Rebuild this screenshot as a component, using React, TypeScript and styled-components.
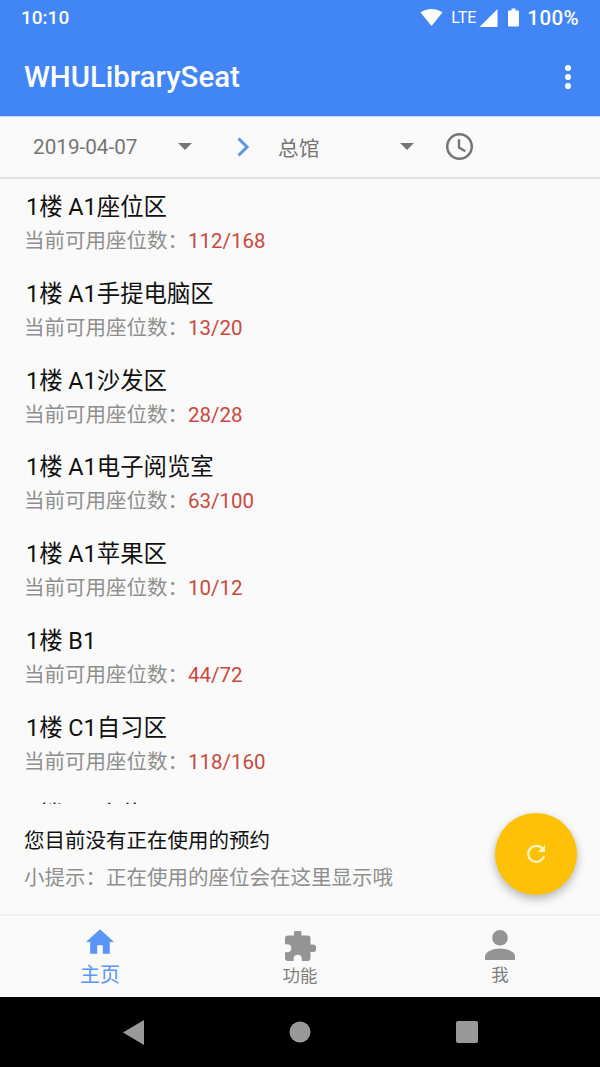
import React from "react";
import styled, { createGlobalStyle } from "styled-components";

const Global = createGlobalStyle`
  html, body { margin: 0; padding: 0; background: #fafafa; }
  * { box-sizing: border-box; }
  body { font-family: Roboto, "Noto Sans CJK SC", sans-serif; }
`;

const Screen = styled.div`
  position: relative;
  width: 600px;
  height: 1067px;
  display: flex;
  flex-direction: column;
  background: #fafafa;
  overflow: hidden;
`;

const Header = styled.header`
  height: 117px;
  flex: none;
  background: #4285f4;
  color: #fff;
  border-bottom: 1px solid #c9d6ee;
  display: flex;
  flex-direction: column;
`;

const StatusBar = styled.div`
  height: 35px;
  padding: 0 21px;
  display: flex;
  align-items: center;
  justify-content: space-between;
  font-size: 19px;
  font-weight: 500;
`;

const StatusRight = styled.div`
  display: flex;
  align-items: center;
`;

const Lte = styled.span`
  font-size: 16px;
  font-weight: 400;
  width: 24px;
  margin: 0 4px 0 8px;
  letter-spacing: 0;
`;

const Percent = styled.span`
  font-size: 20.5px;
  margin-left: 8px;
  letter-spacing: 0.4px;
`;

const TitleBar = styled.div`
  flex: 1;
  padding: 2px 28px 0 24px;
  display: flex;
  align-items: center;
  justify-content: space-between;
`;

const AppTitle = styled.div`
  font-size: 29.4px;
  font-weight: 500;
`;

const FilterBar = styled.div`
  height: 62px;
  flex: none;
  display: flex;
  align-items: center;
  border-bottom: 2px solid #e2e2e2;
  padding-bottom: 1px;
  color: #757575;
  font-size: 20.7px;
`;

const Select = styled.div<{ $width: number; $left: number }>`
  width: ${(p) => p.$width}px;
  margin-left: ${(p) => p.$left}px;
  display: flex;
  align-items: center;
  justify-content: space-between;
`;

const Caret = styled.span`
  width: 0;
  height: 0;
  border-left: 7.5px solid transparent;
  border-right: 7.5px solid transparent;
  border-top: 7.5px solid #757575;
`;

const IconSlot = styled.span<{ $left: number }>`
  display: flex;
  margin-left: ${(p) => p.$left}px;
`;

const List = styled.div`
  height: 625px;
  flex: none;
  overflow: hidden;
`;

const Row = styled.div`
  height: 86.8px;
  padding: 11px 25px 0 26px;
`;

const RowTitle = styled.div`
  font-size: 23.4px;
  line-height: 34px;
  color: #111;
`;

const RowCount = styled.div`
  font-size: 20.5px;
  line-height: 30px;
  margin-left: -2px;
  margin-top: 2px;
  color: #8f8f8f;
`;

const Available = styled.span`
  color: #c9483f;
`;

const Footer = styled.div`
  height: 112px;
  flex: none;
  padding: 19px 24px 0;
  border-bottom: 2px solid #f1f1f1;
`;

const FooterTitle = styled.div`
  font-size: 20.5px;
  line-height: 36px;
  color: #111;
`;

const FooterHint = styled.div`
  font-size: 20.5px;
  line-height: 38px;
  color: #8f8f8f;
  white-space: nowrap;
`;

const Fab = styled.div`
  position: absolute;
  left: 495px;
  top: 813px;
  width: 82px;
  height: 82px;
  border-radius: 50%;
  background: #ffc107;
  box-shadow: 0 4px 10px rgba(0, 0, 0, 0.28);
  display: flex;
  align-items: center;
  justify-content: center;
`;

const BottomNav = styled.nav`
  height: 81px;
  flex: none;
  display: grid;
  grid-template-columns: repeat(3, 200px);
`;

const Tab = styled.div<{ $active?: boolean }>`
  display: flex;
  flex-direction: column;
  align-items: center;
  padding-top: ${(p) => (p.$active ? 13 : 14)}px;
  color: ${(p) => (p.$active ? "#5b95f5" : "#808080")};
`;

const TabLabel = styled.div<{ $active?: boolean }>`
  font-size: ${(p) => (p.$active ? 20 : 17.5)}px;
  line-height: 24px;
  margin-top: ${(p) => (p.$active ? 9 : 3)}px;
`;

const SystemBar = styled.div`
  flex: 1;
  background: #000;
  display: flex;
  align-items: center;
  justify-content: center;
  gap: 145px;
`;

// The last entry sits mostly below the fold of the scrolling list, so only its name is rendered.
const SEATS: { name: string; count?: string }[] = [
  { name: "1楼 A1座位区", count: "112/168" },
  { name: "1楼 A1手提电脑区", count: "13/20" },
  { name: "1楼 A1沙发区", count: "28/28" },
  { name: "1楼 A1电子阅览室", count: "63/100" },
  { name: "1楼 A1苹果区", count: "10/12" },
  { name: "1楼 B1", count: "44/72" },
  { name: "1楼 C1自习区", count: "118/160" },
  { name: "2楼 A2座位区" },
];

export default function App() {
  return (
    <Screen>
      <Global />
      <Header>
        <StatusBar>
          <span>10:10</span>
          <StatusRight>
            <svg width="23" height="17" viewBox="0 0 22 17">
              <path d="M0 3.500C3 1.200 7 0 11 0s8 1.200 11 3.500L11 17z" fill="#fff" />
            </svg>
            <Lte>LTE</Lte>
            <svg width="19" height="18" viewBox="0 0 17 17">
              <path d="M17 0v17H0z" fill="#fff" />
            </svg>
            <svg width="11" height="19" viewBox="0 0 11 18" style={{ marginLeft: 10 }}>
              <path d="M3.500 0h4v2H10a1 1 0 0 1 1 1v14a1 1 0 0 1-1 1H1a1 1 0 0 1-1-1V3a1 1 0 0 1 1-1h2.500z" fill="#fff" />
            </svg>
            <Percent>100%</Percent>
          </StatusRight>
        </StatusBar>
        <TitleBar>
          <AppTitle>WHULibrarySeat</AppTitle>
          <svg width="8" height="26" viewBox="0 0 8 26">
            <circle cx="4" cy="4" r="3" fill="#fff" />
            <circle cx="4" cy="13" r="3" fill="#fff" />
            <circle cx="4" cy="22" r="3" fill="#fff" />
          </svg>
        </TitleBar>
      </Header>

      <FilterBar>
        <Select $width={159} $left={33}>
          <span>2019-04-07</span>
          <Caret />
        </Select>
        <IconSlot $left={44}>
          <svg width="14" height="20" viewBox="0 0 14 20">
            <path d="M2.500 1.500 11 10l-8.500 8.500" fill="none" stroke="#5b95e8" strokeWidth="3" />
          </svg>
        </IconSlot>
        <Select $width={136} $left={28}>
          <span>总馆</span>
          <Caret />
        </Select>
        <IconSlot $left={31}>
          <svg width="29" height="29" viewBox="0 0 30 30">
            <circle cx="15" cy="15" r="12.700" fill="none" stroke="#757575" strokeWidth="2.600" />
            <path d="M14.500 7.500V16l6.500 3.800" fill="none" stroke="#757575" strokeWidth="2.400" />
          </svg>
        </IconSlot>
      </FilterBar>

      <List>
        {SEATS.map(({ name, count }) => (
          <Row key={name}>
            <RowTitle>{name}</RowTitle>
            {count && (
              <RowCount>
                当前可用座位数：<Available>{count}</Available>
              </RowCount>
            )}
          </Row>
        ))}
      </List>

      <Footer>
        <FooterTitle>您目前没有正在使用的预约</FooterTitle>
        <FooterHint>小提示：正在使用的座位会在这里显示哦</FooterHint>
      </Footer>

      <BottomNav>
        <Tab $active>
          <svg width="28" height="25" viewBox="0 0 30 26">
            <path d="M15 0 30 13.500h-4.500V26H18v-9h-6v9H4.500V13.500H0z" fill="#5b95f5" />
          </svg>
          <TabLabel $active>主页</TabLabel>
        </Tab>
        <Tab>
          <svg width="32" height="30" viewBox="2 2 20 20" style={{ marginTop: 1 }}>
            <path
              d="M20.500 11H19V7a2 2 0 0 0-2-2h-4V3.500a2.500 2.500 0 0 0-5 0V5H4a2 2 0 0 0-2 2v3.800h1.500a2.700 2.700 0 0 1 0 5.400H2V20a2 2 0 0 0 2 2h3.800v-1.500a2.700 2.700 0 0 1 5.400 0V22H17a2 2 0 0 0 2-2v-4h1.500a2.500 2.500 0 0 0 0-5z"
              fill="#949494"
            />
          </svg>
          <TabLabel>功能</TabLabel>
        </Tab>
        <Tab>
          <svg width="30" height="30" viewBox="0 0 30 30">
            <circle cx="15" cy="7.800" r="7.800" fill="#949494" />
            <path d="M0 30v-3.500C0 21.500 8 18.500 15 18.500s15 3 15 8V30z" fill="#949494" />
          </svg>
          <TabLabel>我</TabLabel>
        </Tab>
      </BottomNav>

      <SystemBar>
        <svg width="21" height="25" viewBox="0 0 21 25">
          <path d="M21 0v25L0 12.500z" fill="#999" />
        </svg>
        <svg width="22" height="22" viewBox="0 0 22 22">
          <circle cx="11" cy="11" r="10.500" fill="#999" />
        </svg>
        <svg width="22" height="22" viewBox="0 0 22 22">
          <rect width="22" height="22" rx="2" fill="#999" />
        </svg>
      </SystemBar>

      <Fab>
        <svg width="22" height="22" viewBox="0 0 22 22">
          <path d="M17.800 6.200A8 8 0 1 0 19 13" fill="none" stroke="#fff3c4" strokeWidth="2.200" />
          <path d="M20 2v7h-7z" fill="#fff3c4" />
        </svg>
      </Fab>
    </Screen>
  );
}
